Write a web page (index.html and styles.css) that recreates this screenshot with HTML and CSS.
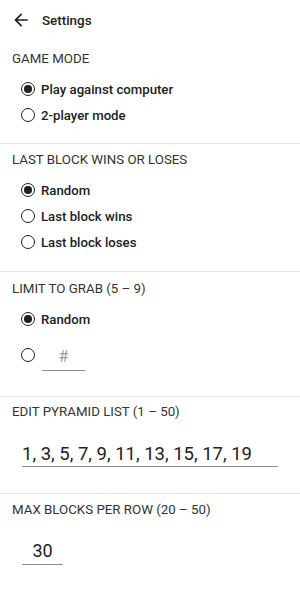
FILE: index.html
```html
<!DOCTYPE html>
<html lang="en">
<head>
    <meta charset="UTF-8">
    <meta name="viewport" content="width=device-width, initial-scale=1.0">
    <title>Settings</title>
    <link rel="stylesheet" href="styles.css">
</head>
<body>
    <div class="header">
        <svg class="back" viewBox="0 0 24 24" width="20" height="20">
            <path d="M20 11H7.83l5.59-5.59L12 4l-8 8 8 8 1.41-1.41L7.83 13H20v-2z" fill="#212121"/>
        </svg>
        <span class="title">Settings</span>
    </div>

    <div class="section first">
        <div class="label">GAME MODE</div>
        <div class="options">
            <label class="option"><span class="radio checked"></span>Play against computer</label>
            <label class="option"><span class="radio"></span>2-player mode</label>
        </div>
    </div>

    <div class="section outcome">
        <div class="label">LAST BLOCK WINS OR LOSES</div>
        <div class="options">
            <label class="option"><span class="radio checked"></span>Random</label>
            <label class="option"><span class="radio"></span>Last block wins</label>
            <label class="option"><span class="radio"></span>Last block loses</label>
        </div>
    </div>

    <div class="section grab">
        <div class="label">LIMIT TO GRAB (5 &ndash; 9)</div>
        <div class="options">
            <label class="option"><span class="radio checked"></span>Random</label>
            <label class="option tall"><span class="radio"></span><input class="field small" type="text" placeholder="#"></label>
        </div>
    </div>

    <div class="section list">
        <div class="label">EDIT PYRAMID LIST (1 &ndash; 50)</div>
        <input class="field wide" type="text" value="1, 3, 5, 7, 9, 11, 13, 15, 17, 19">
    </div>

    <div class="section rows">
        <div class="label">MAX BLOCKS PER ROW (20 &ndash; 50)</div>
        <input class="field short" type="text" value="30">
    </div>
</body>
</html>
```

FILE: styles.css
```css
body {
    font-family: 'Roboto', 'Liberation Sans', sans-serif;
    background-color: #ffffff;
    color: #212121;
    margin: 0;
}
.header {
    height: 42px;
    display: flex;
    align-items: center;
    padding-left: 11px;
    box-sizing: border-box;
}
.back {
    display: block;
    margin-top: -2px;
}
.title {
    font-size: 13.4px;
    font-weight: 500;
    margin-left: 11px;
    margin-top: -2px;
}
.section {
    border-top: 1px solid #e2e2e2;
    padding: 7px 12px 15px;
}
.section.first {
    border-top: none;
    padding-top: 8px;
}
.outcome {
    padding-bottom: 16px;
}
.label {
    font-size: 13.3px;
    line-height: 18px;
    color: #333333;
}
.options {
    margin-top: 8px;
    padding-left: 9px;
}
.option {
    display: flex;
    align-items: center;
    height: 26px;
    font-size: 13.2px;
    font-weight: 500;
}
.option.tall {
    height: 46px;
}
.radio {
    width: 12px;
    height: 12px;
    border: 1.8px solid #212121;
    border-radius: 50%;
    margin-right: 6px;
    display: flex;
    align-items: center;
    justify-content: center;
}
.radio.checked::after {
    content: '';
    width: 7.5px;
    height: 7.5px;
    border-radius: 50%;
    background-color: #212121;
}
.field {
    font-family: 'Roboto', 'Liberation Sans', sans-serif;
    border: none;
    border-bottom: 1px solid #8a8a8a;
    outline: none;
    padding: 0;
    color: #212121;
    background: transparent;
    display: block;
}
.field.small {
    width: 43px;
    height: 26px;
    margin-left: 1px;
    margin-top: 4px;
    font-size: 16px;
    text-align: center;
}
.field.small::placeholder {
    color: #9e9e9e;
}
.grab {
    padding-top: 8px;
    padding-bottom: 18px;
}
.list {
    padding-top: 6px;
    padding-bottom: 26px;
}
.field.wide {
    width: 256px;
    height: 24px;
    margin: 21px 0 0 10px;
    font-size: 18.5px;
    line-height: 24px;
}
.field.short {
    width: 41px;
    height: 26px;
    margin: 19px 0 0 10px;
    font-size: 18px;
    line-height: 26px;
    text-align: center;
}
```
